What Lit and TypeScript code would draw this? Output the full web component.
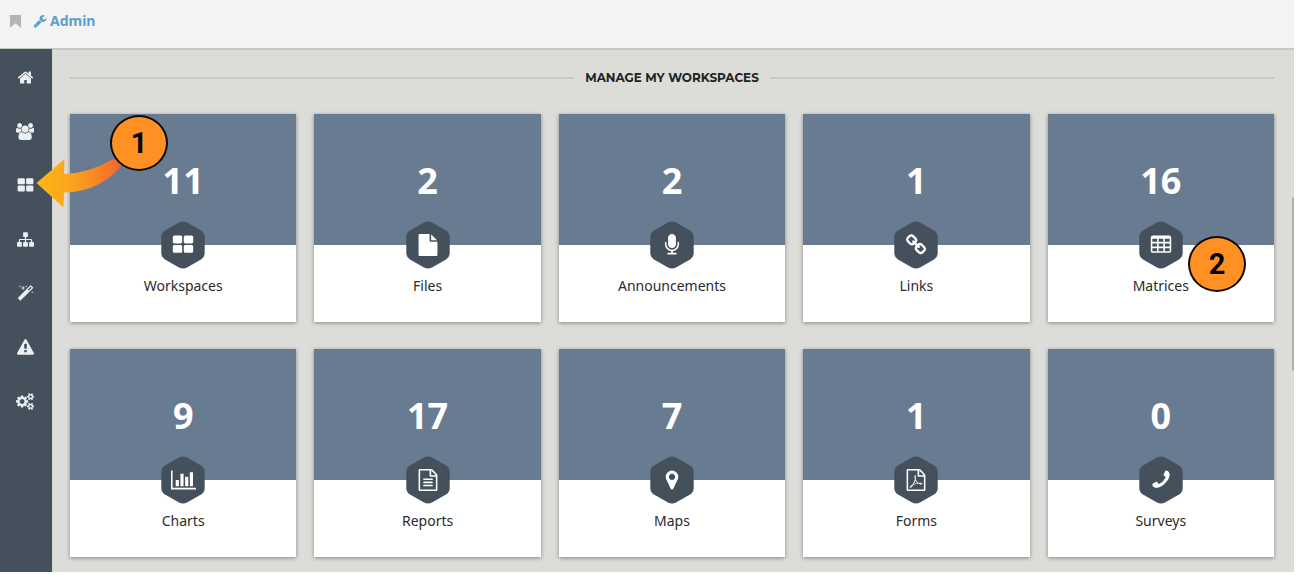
import { LitElement, html, css, svg } from "lit";
import { customElement, property } from "lit/decorators.js";

interface Glyph {
  box: number;
  d: string;
  flip?: boolean;
}

const PAGE =
  "M1596 380q28 28 48 76t20 88v1152q0 40-28 68t-68 28h-1344q-40 0-68-28t-28-68v-1600q0-40 28-68t68-28h896q40 0 88 20t76 48zm-444-244v376h376q-10-29-22-41l-313-313q-12-12-41-22zm384 1528v-1024h-416q-40 0-68-28t-28-68v-416h-768v1536h1280z";

const cell = (x: number, y: number) =>
  `M${x + 384} ${y + 224}v-192q0-14-9-23t-23-9h-320q-14 0-23 9t-9 23v192q0 14 9 23t23 9h320q14 0 23-9t9-23z`;

const pane = (x: number, y: number) =>
  `M${x + 768} ${y + 128}v384q0 52-38 90t-90 38h-512q-52 0-90-38t-38-90v-384q0-52 38-90t90-38h512q52 0 90 38t38 90z`;

const GLYPHS: Record<string, Glyph> = {
  bookmark: { box: 1792, d: "M128 0h1536v1792l-768-640-768 640z" },
  wrench: {
    box: 1792,
    d: "M448 1472q0-26-19-45t-45-19-45 19-19 45 19 45 45 19 45-19 19-45zm644-420l-682 682q-37 37-90 37-52 0-91-37l-106-108q-38-36-38-90 0-53 37-91l681-681q39 98 114.5 173.5t173.5 114.5zm634-435q0 39-23 106-47 134-164.5 217.5t-258.5 83.5q-185 0-316.5-131.5t-131.5-316.5 131.5-316.5 316.5-131.5q58 0 121.5 16.5t107.5 46.5q16 11 16 28t-16 28l-293 169v224l193 107q5-3 79-48.5t135.5-81 70.5-35.5q15 0 23.5 10t8.5 25z",
  },
  home: {
    box: 1792,
    d: "M1472 992v480q0 26-19 45t-45 19h-384v-384h-256v384h-384q-26 0-45-19t-19-45v-480q0-1 .5-3t.5-3l575-474 575 474q1 2 1 6zm223-69l-62 74q-8 9-21 11h-3q-13 0-21-7l-692-577-692 577q-12 8-24 7-13-2-21-11l-62-74q-8-10-7-23.5t11-21.5l719-599q32-26 76-26t76 26l244 204v-195q0-14 9-23t23-9h192q14 0 23 9t9 23v408l219 182q10 8 11 21.5t-7 23.5z",
  },
  users: {
    box: 1920,
    d: "M593 896q-162 5-265 128h-134q-82 0-138-40.5t-56-118.5q0-353 124-353 6 0 43.5 21t97.5 42.5 119 21.5q67 0 133-23-5 37-5 66 0 139 81 256zm1071 637q0 120-73 189.5t-194 69.5h-874q-121 0-194-69.5t-73-189.5q0-53 3.5-103.5t14-109 26.5-108.5 43-97.5 62-81 85.5-53.5 111.5-20q10 0 43 21.5t73 48 107 48 135 21.5 135-21.5 107-48 73-48 43-21.5q61 0 111.5 20t85.5 53.5 62 81 43 97.5 26.5 108.5 14 109 3.5 103.5zm-1024-1277q0 106-75 181t-181 75-181-75-75-181 75-181 181-75 181 75 75 181zm704 384q0 159-112.5 271.5t-271.5 112.5-271.5-112.5-112.5-271.5 112.5-271.5 271.5-112.5 271.5 112.5 112.5 271.5zm576 225q0 78-56 118.5t-138 40.5h-134q-103-123-265-128 81-117 81-256 0-29-5-66 66 23 133 23 59 0 119-21.5t97.5-42.5 43.5-21q124 0 124 353zm-128-609q0 106-75 181t-181 75-181-75-75-181 75-181 181-75 181 75 75 181z",
  },
  panes: { box: 1792, d: pane(64, 128) + pane(64, 896) + pane(960, 128) + pane(960, 896) },
  sitemap: {
    box: 1792,
    d: "M1792 1248v320q0 40-28 68t-68 28h-320q-40 0-68-28t-28-68v-320q0-40 28-68t68-28h96v-192h-512v192h96q40 0 68 28t28 68v320q0 40-28 68t-68 28h-320q-40 0-68-28t-28-68v-320q0-40 28-68t68-28h96v-192h-512v192h96q40 0 68 28t28 68v320q0 40-28 68t-68 28h-320q-40 0-68-28t-28-68v-320q0-40 28-68t68-28h96v-192q0-52 38-90t90-38h512v-192h-96q-40 0-68-28t-28-68v-320q0-40 28-68t68-28h320q40 0 68 28t28 68v320q0 40-28 68t-68 28h-96v192h512q52 0 90 38t38 90v192h96q40 0 68 28t28 68z",
  },
  magic: {
    box: 1792,
    d: "M1254 581l293-293-107-107-293 293zm447-293q0 27-18 45l-1286 1286q-18 18-45 18t-45-18l-198-198q-18-18-18-45t18-45l1286-1286q18-18 45-18t45 18l198 198q18 18 18 45zm-1351-190l98 30-98 30-30 98-30-98-98-30 98-30 30-98zm350 162l196 60-196 60-60 196-60-196-196-60 196-60 60-196zm930 478l98 30-98 30-30 98-30-98-98-30 98-30 30-98zm-640-640l98 30-98 30-30 98-30-98-98-30 98-30 30-98z",
  },
  warning: {
    box: 1792,
    d: "M1024 1375v-190q0-14-9.5-23.5t-22.5-9.5h-192q-13 0-22.5 9.5t-9.5 23.5v190q0 14 9.5 23.5t22.5 9.5h192q13 0 22.5-9.5t9.5-23.5zm-2-374l18-459q0-12-10-19-13-11-24-11h-220q-11 0-24 11-10 7-10 21l17 457q0 10 10 16.5t24 6.5h185q14 0 23.5-6.5t10.5-16.5zm-14-934l768 1408q35 63-2 126-17 29-46.5 46t-63.5 17h-1536q-34 0-63.5-17t-46.5-46q-37-63-2-126l768-1408q17-31 47-49t65-18 65 18 47 49z",
  },
  cogs: {
    box: 1920,
    d: "M896 896q0-106-75-181t-181-75-181 75-75 181 75 181 181 75 181-75 75-181zm768 512q0-52-38-90t-90-38-90 38-38 90q0 53 37.5 90.5t90.5 37.5 90.5-37.5 37.5-90.5zm0-1024q0-52-38-90t-90-38-90 38-38 90q0 53 37.5 90.5t90.5 37.5 90.5-37.5 37.5-90.5zm-384 421v185q0 10-7 19.5t-16 10.5l-155 24q-11 35-32 76 34 48 90 115 7 11 7 20 0 12-7 19-23 30-82.5 89.5t-78.5 59.5q-11 0-21-7l-115-90q-37 19-77 31-11 108-23 155-7 24-30 24h-186q-11 0-20-7.5t-10-17.5l-23-153q-34-10-75-31l-118 89q-7 7-20 7-11 0-21-8-144-133-144-160 0-9 7-19 10-14 41-53t47-61q-23-44-35-82l-152-24q-10-1-17-9.5t-7-19.5v-185q0-10 7-19.5t16-10.5l155-24q11-35 32-76-34-48-90-115-7-11-7-20 0-12 7-20 22-30 82-89t79-59q11 0 21 7l115 90q34-18 77-32 11-108 23-154 7-24 30-24h186q11 0 20 7.5t10 17.5l23 153q34 10 75 31l118-89q8-7 20-7 11 0 21 8 144 133 144 160 0 8-7 19-12 16-42 54t-45 60q23 48 34 82l152 23q10 2 17 10.5t7 19.5zm640 533v140q0 16-149 31-12 27-30 52 51 113 51 138 0 4-4 7-122 71-124 71-8 0-46-47t-52-68q-20 2-30 2t-30-2q-14 21-52 68t-46 47q-2 0-124-71-4-3-4-7 0-25 51-138-18-25-30-52-149-15-149-31v-140q0-16 149-31 13-29 30-52-51-113-51-138 0-4 4-7 4-2 35-20t59-34 30-16q8 0 46 46.5t52 67.5q20-2 30-2t30 2q51-71 92-112l6-2q4 0 124 70 4 3 4 7 0 25-51 138 17 23 30 52 149 15 149 31zm0-1024v140q0 16-149 31-12 27-30 52 51 113 51 138 0 4-4 7-122 71-124 71-8 0-46-47t-52-68q-20 2-30 2t-30-2q-14 21-52 68t-46 47q-2 0-124-71-4-3-4-7 0-25 51-138-18-25-30-52-149-15-149-31v-140q0-16 149-31 13-29 30-52-51-113-51-138 0-4 4-7 4-2 35-20t59-34 30-16q8 0 46 46.5t52 67.5q20-2 30-2t30 2q51-71 92-112l6-2q4 0 124 70 4 3 4 7 0 25-51 138 17 23 30 52 149 15 149 31z",
  },
  file: {
    box: 1792,
    d: "M1152 512v-472q22 14 36 28l408 408q14 14 28 36h-472zm-128 32q0 40 28 68t68 28h544v1056q0 40-28 68t-68 28h-1344q-40 0-68-28t-28-68v-1600q0-40 28-68t68-28h800v544z",
  },
  microphone: {
    box: 1792,
    d: "M1472 704v128q0 221-147.5 384.5t-364.5 187.5v132h256q26 0 45 19t19 45-19 45-45 19h-640q-26 0-45-19t-19-45 19-45 45-19h256v-132q-217-24-364.5-187.5t-147.5-384.5v-128q0-26 19-45t45-19 45 19 19 45v128q0 185 131.5 316.5t316.5 131.5 316.5-131.5 131.5-316.5v-128q0-26 19-45t45-19 45 19 19 45zm-256-384v512q0 132-94 226t-226 94-226-94-94-226v-512q0-132 94-226t226-94 226 94 94 226z",
  },
  link: {
    box: 1792,
    d: "M1520 1216q0-40-28-68l-208-208q-28-28-68-28-42 0-72 32 3 3 19 18.5t21.5 21.5 15 19 13 25.5 3.5 27.5q0 40-28 68t-68 28q-15 0-27.5-3.5t-25.5-13-19-15-21.5-21.5-18.5-19q-33 31-33 73 0 40 28 68l206 207q27 27 68 27 40 0 68-26l147-146q28-28 28-67zm-703-705q0-40-28-68l-206-207q-28-28-68-28-39 0-68 27l-147 146q-28 28-28 67 0 40 28 68l208 208q27 27 68 27 42 0 72-31-3-3-19-18.5t-21.5-21.5-15-19-13-25.5-3.5-27.5q0-40 28-68t68-28q15 0 27.5 3.5t25.5 13 19 15 21.5 21.5 18.5 19q33-31 33-73zm895 705q0 120-85 203l-147 146q-83 83-203 83-121 0-204-85l-206-207q-83-83-83-203 0-123 88-209l-88-88q-86 88-208 88-120 0-204-84l-208-208q-84-84-84-204t85-203l147-146q83-83 203-83 121 0 204 85l206 207q83 83 83 203 0 123-88 209l88 88q86-88 208-88 120 0 204 84l208 208q84 84 84 204z",
  },
  table: {
    box: 1792,
    d:
      "M1728 288v1088q0 66-47 113t-113 47h-1344q-66 0-113-47t-47-113v-1088q0-66 47-113t113-47h1344q66 0 113 47t47 113z" +
      [192, 704, 1216].map((x) => [384, 768, 1152].map((y) => cell(x, y)).join("")).join(""),
  },
  chart: {
    box: 2048,
    d: "M640 896v512h-256v-512h256zm384-512v1024h-256v-1024h256zm1024 1152v128h-2048v-1536h128v1408h1920zm-640-896v768h-256v-768h256zm384-384v1152h-256v-1152h256z",
  },
  report: {
    box: 1792,
    d:
      PAGE +
      "m-1024-864q0-14 9-23t23-9h704q14 0 23 9t9 23v64q0 14-9 23t-23 9h-704q-14 0-23-9t-9-23v-64zm736 224q14 0 23 9t9 23v64q0 14-9 23t-23 9h-704q-14 0-23-9t-9-23v-64q0-14 9-23t23-9h704zm0 256q14 0 23 9t9 23v64q0 14-9 23t-23 9h-704q-14 0-23-9t-9-23v-64q0-14 9-23t23-9h704z",
  },
  marker: {
    box: 1792,
    d: "M1152 640q0-106-75-181t-181-75-181 75-75 181 75 181 181 75 181-75 75-181zm256 0q0 109-33 179l-364 774q-16 33-47.5 52t-67.5 19-67.5-19-46.5-52l-365-774q-33-70-33-179 0-212 150-362t362-150 362 150 150 362z",
  },
  form: {
    box: 1792,
    d:
      PAGE +
      "m-514-593q33 26 84 56 59-7 117-7 147 0 177 49 16 22 2 52 0 1-1 2l-2 2v1q-6 38-71 38-48 0-115-20t-130-53q-221 24-392 83-153 262-242 262-15 0-28-7l-24-12q-1-1-6-5-10-10-6-36 9-40 56-91.5t132-96.5q14-9 23 6 2 2 2 4 52-85 107-197 68-136 104-262-24-82-30.5-159.5t6.5-127.5q11-40 42-40h22q23 0 35 15 18 21 9 68-2 6-4 8 1 3 1 8v30q-2 123-14 192 55 164 146 238zm-576 411q52-24 137-158-51 40-87.5 84t-49.5 74zm398-920q-15 42-2 132 1-7 7-44 0-3 7-43 1-4 4-8-1-1-1-2-1-2-1-3-1-22-13-36 0 1-1 2v2zm-124 661q135-54 284-81-2-1-13-9.5t-16-13.5q-76-67-127-176-27 86-83 197-30 56-45 83zm646-16q-24-24-140-24 76 28 124 28 14 0 18-1 0-1-2-3z",
  },
  phone: {
    box: 1792,
    flip: true,
    d: "M1600 1240q0 27-10 70.5t-21 68.5q-21 50-122 106-94 51-186 51-27 0-53-3.5t-57.5-12.5-47-14.5-55.5-20.5-49-18q-98-35-175-83-127-79-264-216t-216-264q-48-77-83-175-3-9-18-49t-20.5-55.5-14.5-47-12.5-57.5-3.5-53q0-92 51-186 56-101 106-122 25-11 68.5-21t70.5-10q14 0 21 3 18 6 53 76 11 19 30 54t35 63.5 31 53.5q3 4 17.5 25t21.5 35.5 7 28.5q0 20-28.5 50t-62 55-62 53-28.5 46q0 9 5 22.5t8.5 20.5 14 24 11.5 19q76 137 174 235t235 174q2 1 19 11.5t24 14 20.5 8.5 22.5 5q18 0 46-28.5t53-62 55-62 50-28.5q14 0 28.5 7t35.5 21.5 25 17.5q25 15 53.5 31t63.5 35 54 30q70 35 76 53 3 7 3 21z",
  },
};

@customElement("glyph-icon")
class GlyphIcon extends LitElement {
  @property() name = "home";

  static styles = css`
    :host {
      display: flex;
      height: 1em;
    }
    svg {
      display: block;
      height: 1em;
      width: auto;
      fill: currentColor;
    }
  `;

  render() {
    const g = GLYPHS[this.name];
    return html`<svg viewBox="0 0 ${g.box} 1792" aria-hidden="true">
      ${svg`<path fill-rule="evenodd" transform=${g.flip ? "translate(1792 0) scale(-1 1)" : "scale(1)"} d=${g.d}></path>`}
    </svg>`;
  }
}

@customElement("stat-card")
class StatCard extends LitElement {
  @property() label = "";
  @property() icon = "";
  @property() count = "";

  static styles = css`
    :host {
      display: block;
      position: relative;
      min-width: 0;
    }
    .card {
      display: flex;
      flex-direction: column;
      align-items: stretch;
      background: #fff;
      color: #2b2b2b;
      text-decoration: none;
      box-shadow: 0 1px 4px rgba(0, 0, 0, 0.4);
    }
    .count {
      height: 131px;
      display: flex;
      align-items: center;
      justify-content: center;
      box-sizing: border-box;
      padding-top: 2px;
      background: #697b90;
      color: #fff;
      font-size: 36px;
      font-weight: 700;
      line-height: 50px;
    }
    .body {
      display: flex;
      flex-direction: column;
      align-items: center;
      height: 77px;
    }
    .badge {
      display: grid;
      place-items: center;
      width: 44px;
      height: 48px;
      margin-top: -24px;
      color: #fff;
      font-size: 22px;
    }
    .badge > * {
      grid-area: 1 / 1;
    }
    .hex {
      width: 44px;
      height: 48px;
      fill: #44505c;
    }
    .label {
      font-size: 14px;
      line-height: 20px;
      margin-top: 7px;
    }
  `;

  render() {
    return html`
      <a class="card" href="#">
        <span class="count">${this.count}</span>
        <span class="body">
          <span class="badge">
            <svg class="hex" viewBox="0 0 44 48" aria-hidden="true">
              <path
                d="M18 1.600Q22 -0.600 26 1.600L40 9.400Q43.700 11.600 43.700 16V32Q43.700 36.400 40 38.600L26 46.400Q22 48.600 18 46.400L4 38.600Q0.300 36.400 0.300 32V16Q0.300 11.600 4 9.400Z"
              ></path>
            </svg>
            <glyph-icon name=${this.icon}></glyph-icon>
          </span>
          <span class="label">${this.label}</span>
        </span>
      </a>
      <slot></slot>
    `;
  }
}

const NAV = [
  ["home", "Home"],
  ["users", "Users"],
  ["panes", "Workspaces"],
  ["sitemap", "Structure"],
  ["magic", "Tools"],
  ["warning", "Alerts"],
  ["cogs", "Settings"],
];

const CARDS = [
  ["11", "Workspaces", "panes"],
  ["2", "Files", "file"],
  ["2", "Announcements", "microphone"],
  ["1", "Links", "link"],
  ["16", "Matrices", "table"],
  ["9", "Charts", "chart"],
  ["17", "Reports", "report"],
  ["7", "Maps", "marker"],
  ["1", "Forms", "form"],
  ["0", "Surveys", "phone"],
];

@customElement("app-root")
class AppRoot extends LitElement {
  static styles = css`
    :host {
      display: flex;
      flex-direction: column;
      box-sizing: border-box;
      min-height: 100vh;
      padding: 0 2px 3px 0;
      background: #fff;
      font-family: "Noto Sans", "Open Sans", sans-serif;
    }
    .top {
      display: flex;
      align-items: center;
      gap: 11px;
      height: 48px;
      box-sizing: border-box;
      padding: 0 9px 6px;
      background: #f4f4f4;
    }
    .mark {
      border: 0;
      padding: 0;
      background: none;
      color: #b4b4b4;
      font-size: 13px;
    }
    .crumb {
      display: flex;
      align-items: center;
      gap: 3px;
      color: #5b9fcd;
      font-size: 14px;
      line-height: 20px;
      font-weight: 700;
      text-decoration: none;
    }
    .shell {
      flex: 1;
      display: flex;
      position: relative;
      border-top: 2px solid #c6c8c3;
      background: #dcddd9;
    }
    .side {
      flex: none;
      display: flex;
      flex-direction: column;
      width: 52px;
      margin-top: -1px;
      padding-top: 1px;
      background: #44505c;
      border-right: 1px solid #d2d3d1;
    }
    .nav {
      position: relative;
      display: flex;
      align-items: center;
      justify-content: center;
      height: 54px;
      padding: 0 2px 0 0;
      border: 0;
      background: none;
      color: #eceff4;
      font-size: 17px;
    }
    .main {
      flex: 1;
      min-width: 0;
      padding: 18px 20px 15px 17px;
    }
    .title {
      display: flex;
      align-items: center;
      gap: 11px;
      margin: 0 0 26px;
      color: #20241f;
      font-family: Montserrat, Inter, sans-serif;
      font-size: 12px;
      line-height: 20px;
      font-weight: 700;
    }
    .title::before,
    .title::after {
      content: "";
      flex: 1;
      height: 2px;
      background: #c8c9c5;
    }
    .grid {
      display: grid;
      grid-template-columns: repeat(5, minmax(0, 1fr));
      gap: 27px 18px;
    }
    .thumb {
      position: absolute;
      right: 0;
      top: 147px;
      width: 2px;
      height: 174px;
      border-radius: 2px 0 0 2px;
      background: #adafab;
    }
    .arrow {
      position: absolute;
      left: 36px;
      top: -2px;
      width: 90px;
      height: 56px;
      z-index: 2;
    }
    .note {
      position: absolute;
      z-index: 3;
      display: flex;
      align-items: center;
      justify-content: center;
      box-sizing: border-box;
      width: 58px;
      height: 56px;
      border: 2px solid #120a06;
      border-radius: 50%;
      background: #ff9124;
      color: #000;
      font-family: Roboto, "Liberation Sans", sans-serif;
      font-size: 29px;
      line-height: 32px;
      font-weight: 700;
    }
    .one {
      left: 110px;
      top: -43px;
    }
    .two {
      right: 28px;
      top: 122px;
    }
  `;

  render() {
    return html`
      <header class="top">
        <button class="mark" aria-label="Bookmark"><glyph-icon name="bookmark"></glyph-icon></button>
        <a class="crumb" href="#"><glyph-icon name="wrench"></glyph-icon>Admin</a>
      </header>
      <div class="shell">
        <nav class="side">
          ${NAV.map(
            ([icon, label]) => html`<button class="nav" aria-label=${label}>
              <glyph-icon name=${icon}></glyph-icon>
              ${icon === "panes"
                ? html`<svg class="arrow" viewBox="0 0 90 56" aria-hidden="true">
                      <defs>
                        <linearGradient id="heat" x1="0" y1="0" x2="1" y2="0">
                          <stop offset="0" stop-color="#fdb913"></stop>
                          <stop offset="0.45" stop-color="#fba01f"></stop>
                          <stop offset="1" stop-color="#f2622d"></stop>
                        </linearGradient>
                      </defs>
                      <path
                        fill="url(#heat)"
                        d="M0.500 27L28.500 3L28 18Q54 17 77 3L88 6Q66 36 28 36.500L27.500 51.500Z"
                      ></path>
                    </svg>
                    <span class="note one">1</span>`
                : ""}
            </button>`
          )}
        </nav>
        <main class="main">
          <h1 class="title">MANAGE MY WORKSPACES</h1>
          <div class="grid">
            ${CARDS.map(
              ([count, label, icon]) => html`<stat-card count=${count} label=${label} icon=${icon}>
                ${label === "Matrices" ? html`<span class="note two">2</span>` : ""}
              </stat-card>`
            )}
          </div>
        </main>
        <div class="thumb"></div>
      </div>
    `;
  }
}
